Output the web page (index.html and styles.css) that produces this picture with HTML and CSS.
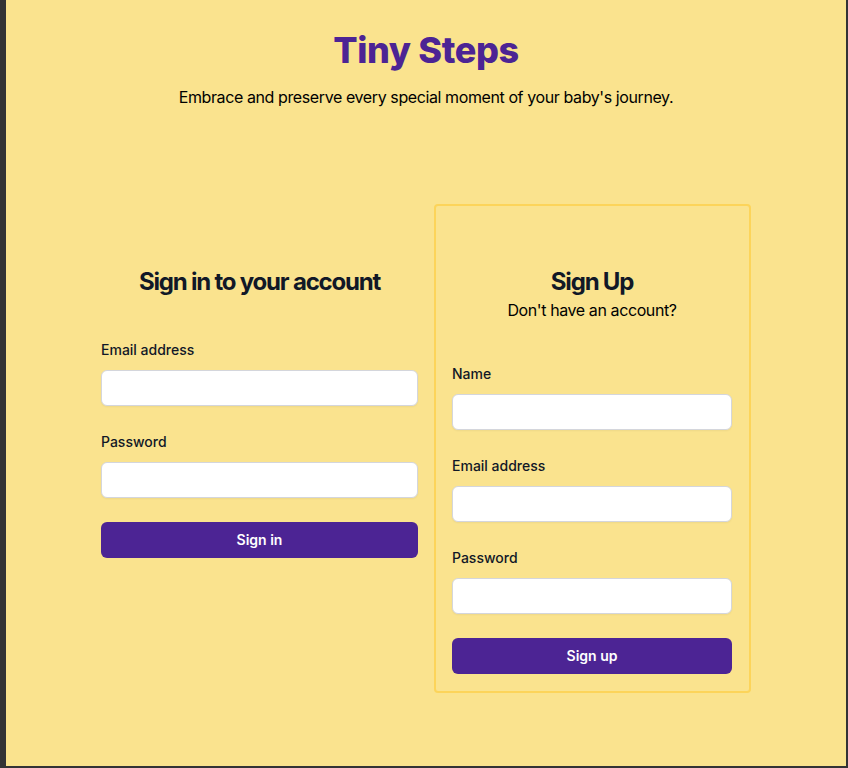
FILE: index.html
```html
<!DOCTYPE html>
<html lang="en">
<head>
<meta charset="utf-8">
<title>Tiny Steps</title>
<link rel="stylesheet" href="styles.css">
</head>
<body>
<div class="frame">
  <header class="hero">
    <h1 class="brand">Tiny Steps</h1>
    <p class="tagline">Embrace and preserve every special moment of your baby's journey.</p>
  </header>
  <main class="panels">
    <section class="panel">
      <h2 class="panel-title">Sign in to your account</h2>
      <form class="form">
        <div class="field">
          <label class="label">Email address</label>
          <input class="input" type="email">
        </div>
        <div class="field">
          <label class="label">Password</label>
          <input class="input" type="password">
        </div>
        <button class="btn" type="button">Sign in</button>
      </form>
    </section>
    <section class="panel card">
      <h2 class="panel-title">Sign Up</h2>
      <p class="panel-sub">Don't have an account?</p>
      <form class="form">
        <div class="field">
          <label class="label">Name</label>
          <input class="input" type="text">
        </div>
        <div class="field">
          <label class="label">Email address</label>
          <input class="input" type="email">
        </div>
        <div class="field">
          <label class="label">Password</label>
          <input class="input" type="password">
        </div>
        <button class="btn" type="button">Sign up</button>
      </form>
    </section>
  </main>
</div>
</body>
</html>
```
FILE: styles.css
```css
* { box-sizing: border-box; }
html, body { margin: 0; padding: 0; }
body {
  background: #333335;
  font-family: Inter, "Noto Sans", sans-serif;
  color: #111827;
  height: 768px;
  overflow: hidden;
}
.frame {
  margin-left: 6px;
  width: 840px;
  height: 766px;
  background: #fae38e;
  padding-top: 30px;
}
.hero { text-align: center; }
.brand {
  margin: 0;
  font-size: 36px;
  line-height: 40px;
  font-weight: 800;
  color: #4c2494;
  letter-spacing: -0.01em;
}
.tagline {
  margin: 15px 0 0;
  font-size: 16px;
  line-height: 24px;
  letter-spacing: -0.4px;
  color: #000;
}
.panels {
  margin: 95px auto 0;
  width: 650px;
  display: grid;
  grid-template-columns: 317px 317px;
  column-gap: 16px;
  align-items: start;
}
.panel {
  padding-top: 61px;
}
.card {
  border: 2px solid #fcd45a;
  border-radius: 4px;
  padding: 59px 17px 17px 16px;
}
.panel-title {
  margin: 0;
  text-align: center;
  font-size: 24px;
  line-height: 34px;
  font-weight: 700;
  letter-spacing: -0.05em;
  color: #111827;
}
.panel-sub {
  margin: -1px 0 0;
  text-align: center;
  font-size: 16px;
  line-height: 24px;
  letter-spacing: -0.4px;
  color: #000;
}
.form {
  margin-top: 39px;
  display: flex;
  flex-direction: column;
  gap: 24px;
}
.card .form { margin-top: 40px; }
.field { display: flex; flex-direction: column; }
.label {
  font-size: 14px;
  line-height: 24px;
  font-weight: 500;
  color: #111827;
}
.input {
  margin-top: 8px;
  height: 36px;
  width: 100%;
  border: 1px solid #d4d6dc;
  border-radius: 6px;
  background: #fff;
  box-shadow: 0 1px 2px rgba(0,0,0,0.05);
  font: inherit;
}
.btn {
  height: 36px;
  width: 100%;
  border: 0;
  border-radius: 6px;
  background: #4c2494;
  color: #fff;
  font-family: Inter, "Noto Sans", sans-serif;
  font-size: 14px;
  font-weight: 600;
  line-height: 24px;
}
```
